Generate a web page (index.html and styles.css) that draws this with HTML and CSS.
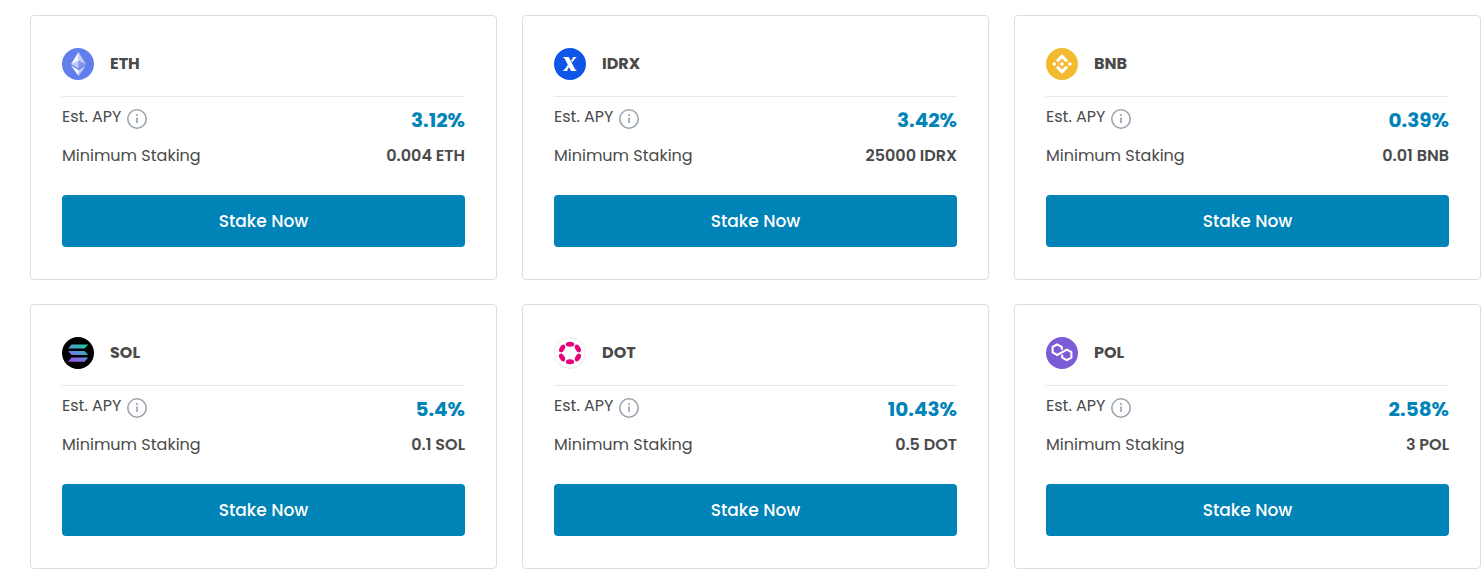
FILE: index.html
```
<!DOCTYPE html>
<html lang="en">
<head>
<meta charset="utf-8">
<meta name="viewport" content="width=device-width, initial-scale=1">
<title>Staking</title>
<link rel="stylesheet" href="styles.css">
</head>
<body>
<svg class="defs" aria-hidden="true">
  <defs>
    <linearGradient id="sol" gradientUnits="userSpaceOnUse" x1="22" y1="7" x2="11" y2="26">
      <stop offset="0" stop-color="#19c99c"/><stop offset="0.5" stop-color="#5b8fd8"/><stop offset="1" stop-color="#9850f0"/>
    </linearGradient>
    <symbol id="info" viewBox="0 0 20 20">
      <circle cx="10" cy="10" r="9.2" fill="none" stroke="#9ba4ae" stroke-width="1.6"/>
      <path d="M10 8.4v5.6" stroke="#9ba4ae" stroke-width="1.7"/>
      <circle cx="10" cy="6" r="1.1" fill="#9ba4ae"/>
    </symbol>
  </defs>
</svg>
<main class="grid">
  <article class="card">
    <header class="head">
      <svg class="coin" viewBox="0 0 32 32" aria-hidden="true">
        <circle cx="16" cy="16" r="16" fill="#627eea"/>
        <path d="M16.5 4v8.87l7.5 3.35z" fill="#fff" fill-opacity=".6"/>
        <path d="M16.5 4L9 16.22l7.5-3.35z" fill="#fff"/>
        <path d="M16.5 21.97v6.03L24 17.62z" fill="#fff" fill-opacity=".6"/>
        <path d="M16.5 28v-6.03L9 17.62z" fill="#fff"/>
        <path d="M16.5 20.57l7.5-4.35-7.5-3.35z" fill="#fff" fill-opacity=".2"/>
        <path d="M9 16.22l7.5 4.35v-7.7z" fill="#fff" fill-opacity=".6"/>
      </svg>
      <h2 class="name">ETH</h2>
    </header>
    <dl class="facts">
      <div class="row apy"><dt>Est. APY <svg class="info" aria-hidden="true"><use href="#info"/></svg></dt><dd>3.12%</dd></div>
      <div class="row"><dt>Minimum Staking</dt><dd>0.004 ETH</dd></div>
    </dl>
    <button class="stake" type="button">Stake Now</button>
  </article>
  <article class="card">
    <header class="head">
      <svg class="coin" viewBox="0 0 32 32" aria-hidden="true">
        <circle cx="16" cy="16" r="16" fill="#0f56e8"/>
        <path d="M8.8 9h6l6.2 12.2 2 1.8h-6L10.6 10.6z" fill="#fff"/>
        <path d="M18.3 9h4.5l-1.4 1.2-3.3 4.4-1-2 2-2.8zM8.8 23l1.6-1.4 3.6-4.8 1.1 2.1-1.9 3 .6 1.1z" fill="#fff"/>
      </svg>
      <h2 class="name">IDRX</h2>
    </header>
    <dl class="facts">
      <div class="row apy"><dt>Est. APY <svg class="info" aria-hidden="true"><use href="#info"/></svg></dt><dd>3.42%</dd></div>
      <div class="row"><dt>Minimum Staking</dt><dd>25000 IDRX</dd></div>
    </dl>
    <button class="stake" type="button">Stake Now</button>
  </article>
  <article class="card">
    <header class="head">
      <svg class="coin" viewBox="0 0 32 32" aria-hidden="true">
        <circle cx="16" cy="16" r="16" fill="#f3ba2f"/>
        <path d="M12.116 14.404L16 10.52l3.886 3.886 2.26-2.26L16 6l-6.144 6.144 2.26 2.26zM6 16l2.26-2.26L10.52 16l-2.26 2.26L6 16zm6.116 1.596L16 21.48l3.886-3.886 2.26 2.259L16 26l-6.144-6.144-.003-.003 2.263-2.257zM21.48 16l2.26-2.26L26 16l-2.26 2.26L21.48 16zm-3.188-.002h.002V16L16 18.294l-2.291-2.29-.004-.004.004-.003.401-.402.195-.195L16 13.706l2.293 2.293z" fill="#fff"/>
      </svg>
      <h2 class="name">BNB</h2>
    </header>
    <dl class="facts">
      <div class="row apy"><dt>Est. APY <svg class="info" aria-hidden="true"><use href="#info"/></svg></dt><dd>0.39%</dd></div>
      <div class="row"><dt>Minimum Staking</dt><dd>0.01 BNB</dd></div>
    </dl>
    <button class="stake" type="button">Stake Now</button>
  </article>
  <article class="card">
    <header class="head">
      <svg class="coin" viewBox="0 0 32 32" aria-hidden="true">
        <circle cx="16" cy="16" r="16" fill="#000"/>
        <path d="M9.6 7.4h16.6L22.6 11.6H6zM6 13.9h16.6l3.6 4.2H9.6zM9.6 20.6h16.6l-3.6 4.2H6z" fill="url(#sol)"/>
      </svg>
      <h2 class="name">SOL</h2>
    </header>
    <dl class="facts">
      <div class="row apy"><dt>Est. APY <svg class="info" aria-hidden="true"><use href="#info"/></svg></dt><dd>5.4%</dd></div>
      <div class="row"><dt>Minimum Staking</dt><dd>0.1 SOL</dd></div>
    </dl>
    <button class="stake" type="button">Stake Now</button>
  </article>
  <article class="card">
    <header class="head">
      <svg class="coin" viewBox="0 0 32 32" aria-hidden="true">
        <circle cx="16" cy="16" r="15.5" fill="#fff" stroke="#ececec"/>
        <g fill="#e6007a">
          <ellipse cx="16" cy="7.2" rx="4.2" ry="2.5"/>
          <ellipse cx="16" cy="24.8" rx="4.2" ry="2.5"/>
          <ellipse cx="16" cy="6.9" rx="4.2" ry="2.5" transform="rotate(60 16 16)"/>
          <ellipse cx="16" cy="6.9" rx="4.2" ry="2.5" transform="rotate(120 16 16)"/>
          <ellipse cx="16" cy="6.9" rx="4.2" ry="2.5" transform="rotate(240 16 16)"/>
          <ellipse cx="16" cy="6.9" rx="4.2" ry="2.5" transform="rotate(300 16 16)"/>
        </g>
      </svg>
      <h2 class="name">DOT</h2>
    </header>
    <dl class="facts">
      <div class="row apy"><dt>Est. APY <svg class="info" aria-hidden="true"><use href="#info"/></svg></dt><dd>10.43%</dd></div>
      <div class="row"><dt>Minimum Staking</dt><dd>0.5 DOT</dd></div>
    </dl>
    <button class="stake" type="button">Stake Now</button>
  </article>
  <article class="card">
    <header class="head">
      <svg class="coin" viewBox="0 0 32 32" aria-hidden="true">
        <circle cx="16" cy="16" r="16" fill="#7b5bd6"/>
        <path d="M15.8 12.8V10L11.2 7.4 6.6 10v5.4l4.6 2.6 9.6-5.4 4.6 2.6v5.4l-4.6 2.6-4.6-2.6v-2.8" fill="none" stroke="#fff" stroke-width="2.1" stroke-linejoin="round"/>
      </svg>
      <h2 class="name">POL</h2>
    </header>
    <dl class="facts">
      <div class="row apy"><dt>Est. APY <svg class="info" aria-hidden="true"><use href="#info"/></svg></dt><dd>2.58%</dd></div>
      <div class="row"><dt>Minimum Staking</dt><dd>3 POL</dd></div>
    </dl>
    <button class="stake" type="button">Stake Now</button>
  </article>
</main>
</body>
</html>
```
FILE: styles.css
```
* {
  box-sizing: border-box;
}

body {
  margin: 0;
  background: #fff;
  color: #4a4a4a;
  font: 16px/24px Poppins, Inter, sans-serif;
}

.defs {
  display: block;
  width: 0;
  height: 0;
}

.grid {
  display: grid;
  grid-template-columns: repeat(3, 1fr);
  gap: 24px 25px;
  padding: 15px 1px 11px 30px;
}

.card {
  display: flex;
  flex-direction: column;
  padding: 32px 31px;
  border: 1px solid #dedede;
  border-radius: 4px;
}

.head {
  display: flex;
  align-items: center;
  gap: 16px;
  padding-bottom: 16px;
  border-bottom: 1px solid #e8e8e8;
}

.coin {
  width: 32px;
  height: 32px;
}

.name {
  margin: 0;
  font-size: 16px;
  font-weight: 700;
}

.facts {
  display: grid;
  gap: 10px;
  margin: 8px 0 27px;
}

.row {
  display: flex;
  align-items: center;
  justify-content: space-between;
}

.row dt {
  display: flex;
  gap: 6px;
  font-weight: 400;
}

.row dd {
  margin: 0;
  font-weight: 600;
}

.apy {
  height: 29px;
}

.apy dt {
  align-self: flex-start;
}

.apy dd {
  color: #0083b7;
  font-size: 20px;
  font-weight: 700;
}

.info {
  width: 20px;
  height: 20px;
  margin-top: 4px;
}

.stake {
  height: 52px;
  border: 0;
  border-radius: 4px;
  background: #0083b7;
  color: #fff;
  font: inherit;
  font-size: 17px;
  font-weight: 500;
}
```
